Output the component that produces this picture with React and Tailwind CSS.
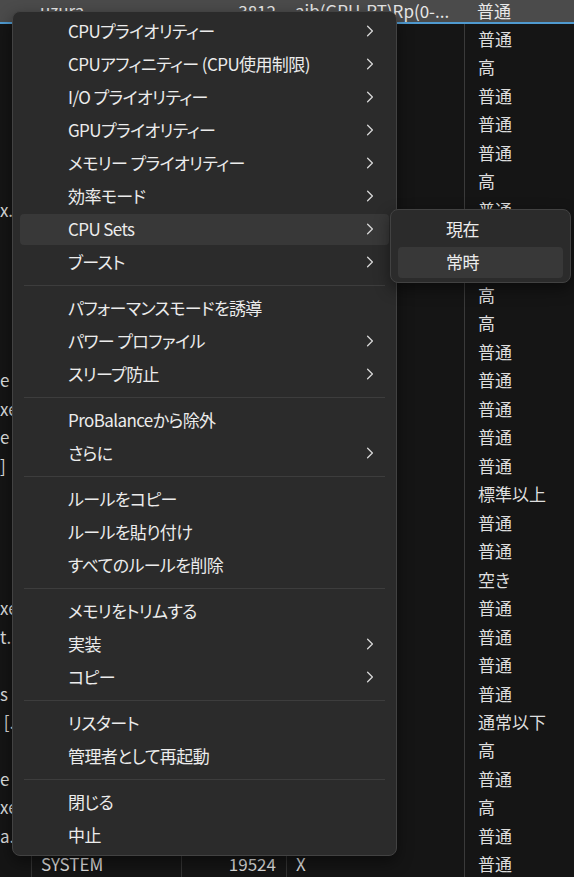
import React from "react";

const FONT = "font-['Noto_Sans_CJK_JP',sans-serif] [font-feature-settings:'palt']";

const priorities = [
  "普通", "普通", "高", "普通", "普通", "普通", "高", "普通", "普通", "普通",
  "高", "高", "普通", "普通", "普通", "普通", "普通", "標準以上", "普通", "普通",
  "空き", "普通", "普通", "普通", "普通", "通常以下", "高", "普通", "高", "普通", "普通",
];

// tail ends of process names that peek out left of the menu
const nameTails = {
  7: "x.", 13: "e", 14: "xe", 15: "e", 16: "]", 21: "xe", 22: "t..",
  24: "s", 25: " [.", 27: "e", 28: "xe", 29: "a.",
};

const menuSections = [
  [
    { label: "CPUプライオリティー", sub: true },
    { label: "CPUアフィニティー (CPU使用制限)", sub: true },
    { label: "I/O プライオリティー", sub: true },
    { label: "GPUプライオリティー", sub: true },
    { label: "メモリー プライオリティー", sub: true },
    { label: "効率モード", sub: true },
    { label: "CPU Sets", sub: true, active: true },
    { label: "ブースト", sub: true },
  ],
  [
    { label: "パフォーマンスモードを誘導" },
    { label: "パワー プロファイル", sub: true },
    { label: "スリープ防止", sub: true },
  ],
  [{ label: "ProBalanceから除外" }, { label: "さらに", sub: true }],
  [
    { label: "ルールをコピー" },
    { label: "ルールを貼り付け" },
    { label: "すべてのルールを削除" },
  ],
  [
    { label: "メモリをトリムする" },
    { label: "実装", sub: true },
    { label: "コピー", sub: true },
  ],
  [{ label: "リスタート" }, { label: "管理者として再起動" }],
  [{ label: "閉じる" }, { label: "中止" }],
];

function Chevron() {
  return (
    <svg width="8" height="12" viewBox="0 0 8 12" className="shrink-0">
      <path
        d="M1.6 1.2 L6.4 6 L1.6 10.8"
        fill="none"
        stroke="#d6d6d6"
        strokeWidth="1.3"
        strokeLinecap="round"
        strokeLinejoin="round"
      />
    </svg>
  );
}

function MenuItem({ label, sub, active }) {
  return (
    <div className="h-[33px] px-[7px] py-px">
      <div
        className={
          "h-full flex items-center pl-[48px] pr-[15px] pb-[2px] rounded-[4px] " +
          (active ? "bg-[#383838]" : "")
        }
      >
        <span className="flex-1 text-[17px] leading-none tracking-[-0.6px] text-[#ececec] whitespace-nowrap">
          {label}
        </span>
        {sub && <Chevron />}
      </div>
    </div>
  );
}

function Separator() {
  return (
    <div className="h-[13px] flex items-center px-[11px]">
      <div className="h-px w-full bg-[#3d3d3d]" />
    </div>
  );
}

function ProcessRow({ index, priority }) {
  const selected = index === 0;
  const line = selected ? "" : "border-l border-[#333]";
  return (
    <div
      className={
        "flex text-[17px] leading-none " +
        (selected
          ? "h-[30px] pt-[4px] bg-[#4b4b4b] border-b-2 border-[#4f9ad0] text-[#e8e8e8]"
          : "h-[28.47px] text-[#dedede]")
      }
    >
      <div className="w-[31px] flex items-center whitespace-pre">
        {nameTails[index] || ""}
      </div>
      <div className={"w-[150px] flex items-center pl-[9px] " + line}>
        {selected ? "uzura" : index === 30 ? "SYSTEM" : ""}
      </div>
      <div className={"w-[105px] flex items-center justify-end pr-[10px] " + line}>
        {selected ? "3812" : index === 30 ? "19524" : ""}
      </div>
      <div className={"w-[178px] flex items-center pl-[9px] whitespace-nowrap " + line}>
        {selected ? "aib(GPU-RT)Rp(0-..." : index === 30 ? "X" : ""}
      </div>
      <div className={"flex-1 flex items-center pl-[13px] " + (selected ? "" : "border-l border-[#3a3a3a]")}>
        {priority}
      </div>
    </div>
  );
}

export default function App() {
  return (
    <div className={"relative w-[574px] h-[877px] overflow-hidden bg-[#151515] " + FONT}>
      <div className="-mt-[6px]">
        {priorities.map((p, i) => (
          <ProcessRow key={i} index={i} priority={p} />
        ))}
      </div>

      {/* context menu */}
      <div className="absolute left-[12px] top-[11px] w-[385px] py-[3px] rounded-[8px] border border-[#424242] bg-[#2b2b2b] shadow-[0_6px_16px_rgba(0,0,0,0.45)]">
        {menuSections.map((section, si) => (
          <React.Fragment key={si}>
            {si > 0 && <Separator />}
            {section.map((item) => (
              <MenuItem key={item.label} {...item} />
            ))}
          </React.Fragment>
        ))}
      </div>

      {/* CPU Sets submenu */}
      <div className="absolute left-[390px] top-[209px] w-[181px] py-[3px] rounded-[8px] border border-[#424242] bg-[#2b2b2b] shadow-[0_6px_16px_rgba(0,0,0,0.45)]">
        <MenuItem label="現在" />
        <MenuItem label="常時" active />
      </div>
    </div>
  );
}
